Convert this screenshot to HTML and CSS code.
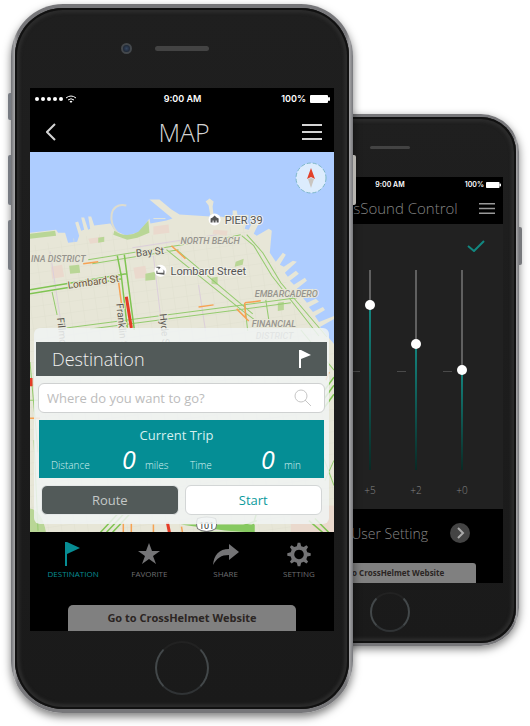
FILE: index.html
```html
<!DOCTYPE html>
<html lang="en">
<head>
<meta charset="utf-8">
<meta name="viewport" content="width=device-width, initial-scale=1">
<title>CrossHelmet App</title>
<link rel="stylesheet" href="styles.css">
</head>
<body>
<main class="stage">

  <section class="phone phone-back" aria-label="CrossSound Control">
    <span class="side-key key-power"></span>
    <div class="face">
      <div class="forehead"><span class="speaker"></span></div>
      <div class="screen">
        <div class="status">
          <span></span>
          <span>9:00 AM</span>
          <span class="power">100%
            <svg class="battery" viewBox="0 0 20 8"><rect width="18" height="8" rx="1"/><rect x="18" y="2" width="2" height="4" rx="1"/></svg>
          </span>
        </div>
        <header class="bar">
          <span></span>
          <h2 class="title">CrossSound Control</h2>
          <button class="icon-button" aria-label="Menu"><svg class="menu" viewBox="0 0 20 16"><path d="M0 2h20M0 8h20M0 14h20"/></svg></button>
        </header>
        <div class="mixer">
          <button class="icon-button confirm" aria-label="Apply"><svg viewBox="0 0 18 12"><path d="M1 6l6 5L17 1"/></svg></button>
          <div class="sliders">
            <label class="slider"><input type="range" min="-7.3" max="7.3" step="0.1" value="5" style="--top:18%"><span>+5</span></label>
            <label class="slider"><input type="range" min="-7.3" max="7.3" step="0.1" value="2" style="--top:37%"><span>+2</span></label>
            <label class="slider"><input type="range" min="-7.3" max="7.3" step="0.1" value="0" style="--top:50%"><span>+0</span></label>
          </div>
        </div>
        <div class="setting-row">
          <span>User Setting</span>
          <button class="next" aria-label="Open user setting"><svg viewBox="0 0 20 20"><path d="M8 5l5 5-5 5"/></svg></button>
        </div>
        <a class="site-link" href="#">Go to CrossHelmet Website</a>
      </div>
      <div class="chin"><span class="home"></span></div>
    </div>
  </section>

  <section class="phone phone-front" aria-label="Map">
    <span class="side-key key-mute"></span>
    <span class="side-key key-up"></span>
    <span class="side-key key-down"></span>
    <span class="side-key key-power"></span>
    <div class="face">
      <div class="forehead"><span class="camera"></span><span class="speaker"></span></div>
      <div class="screen">
        <div class="status">
          <span class="signal">
            <svg viewBox="0 0 42 10">
              <circle cx="2" cy="5" r="2"/><circle cx="8" cy="5" r="2"/><circle cx="14" cy="5" r="2"/><circle cx="20" cy="5" r="2"/><circle cx="26" cy="5" r="2"/>
              <path class="wifi" d="M31 4q5-4 10 0M33 6q3-2.500 6 0"/><path d="M34.500 7.200q1.500-1 3 0L36 9z"/>
            </svg>
          </span>
          <span>9:00 AM</span>
          <span class="power">100%
            <svg class="battery" viewBox="0 0 20 8"><rect width="18" height="8" rx="1"/><rect x="18" y="2" width="2" height="4" rx="1"/></svg>
          </span>
        </div>
        <header class="bar">
          <button class="icon-button" aria-label="Back"><svg class="back" viewBox="0 0 10 18"><path d="M9 1L1 9l8 8"/></svg></button>
          <h1 class="title">MAP</h1>
          <button class="icon-button" aria-label="Menu"><svg class="menu" viewBox="0 0 20 16"><path d="M0 1h20M0 8h20M0 15h20"/></svg></button>
        </header>

        <div class="map-view">
          <svg class="map" viewBox="30 152 303 380" preserveAspectRatio="xMidYMid slice" role="img" aria-label="San Francisco">
            <defs>
              <pattern id="blocks" width="13" height="11" patternUnits="userSpaceOnUse" patternTransform="rotate(-8)">
                <path d="M0 0H13M0 0V11" fill="none" stroke="#e0dfcf" stroke-width="1"/>
              </pattern>
            </defs>
            <rect x="30" y="152" width="303" height="380" fill="#aecdff"/>
            <path id="land" fill="#e7e6d7" d="M30 233L56 230L58 233L65 233L68 243L77 242L79 236L75 223L78 222L81 231L84 230L81 218L84 218L88 230L90 229L88 217L91 217L94 226L110 224L115 231L126 236L140 232L149 219L150 224L166 221L172 219L149 200L159 200L171 210L179 215L210 217L208 206L205 202L209 199L213 202L212 207L213 216L232 219L232 211L236 211L238 222L242 223L245 215L248 216L244 229L248 230L252 222L258 224L253 234L256 236L268 229L271 231L269 253L275 262L282 253L285 255L279 265L283 267L292 261L296 262L284 273L287 277L295 271L298 274L289 281L293 285L304 278L306 281L296 289L299 293L312 289L314 292L302 298L306 303L315 299L318 302L308 307L312 312L322 307L324 310L314 316L318 322L333 316L333 319L319 327L333 344V532H30Z"/>
            <path d="M126 206C108 202 108 224 117 233" fill="none" stroke="#dddccf" stroke-width="2"/>
            <path d="M153 219h12" stroke="#e7e6d7"/>
            <path fill="url(#blocks)" d="M30 246L112 232L126 238L245 226L333 348V532H30Z"/>
            <g fill="#ead9cd">
              <path d="M51 267l11-2 2 12-12 2zM133 268l12-2 2 12-12 1zM153 227l15-2 1 8-16 2zM213 230l14 1-1 5-14-2zM88 239l14-2 2 5-14 2zM290 505h43v27h-43z"/>
            </g>
            <g fill="#b9d696">
              <path d="M30 234l25-3 1 5-26 3zM114 231q12 8 24 1l10-11 1 12-12 5-10 2-14-5zM98 238l6-1v5l-6 1zM69 266l10-1 1 8-10 1zM145 274l10-2v8l-10 1zM235 262l8-3-1 6-8 2zM211 278l6-1v8l-6-1zM277 303l6-1v8l-6 1zM30 508q12 2 16 24H30z"/>
            </g>
            <g fill="none" stroke="#dccfdb" stroke-width="1">
              <path d="M50 252l12 78M153 256l9 76M198 285l7 46M132 248l84-13"/>
            </g>
            <g fill="none" stroke="#94cb6e" stroke-width="1">
              <path d="M88 260l100-16M92 264l86-14M166 250l76 61 16 12M176 250l76 64M66 328l230-30M90 329l200-26M52 292l5 23M265 300l3 20M244 304l3 27M212 241l28-6"/>
              <path d="M241 236l12 10 18 30 47 60M246 235l16 18 18 30 46 54"/>
              <path d="M30 362l8 90M34 440l4 90M30 400h10M300 330l33 40M318 445l15 40M324 480l9-20"/>
            </g>
            <g fill="none" stroke="#7fc452" stroke-width="1.500">
              <path d="M30 290l96-16M30 294l92-15M117 256l4 20 6 52M124 255l10 75"/>
              <path d="M320 395l13-18M320 403l13-18M320 412l13-18M100 532l28-30M106 532l30-32M112 532l32-34M200 532h50l6-20M230 530l26-10M308 520l14 12M314 518l14 14"/>
            </g>
            <path d="M180 524l74 0 0 8-30-2z" fill="#86c960"/>
            <g fill="none" stroke="#f6a253" stroke-width="1.500">
              <path d="M83 264l15-2M171 246l14 13M198 307l15-2M244 303l16-2M244 303l1 15M236 309l12 12M118 280l4 30M30 418h10M328 372l-3 8M123 522v10M131 522v10M153 524v8M181 526l1 6"/>
            </g>
            <path d="M126 297l5 31M31 378v8M167 522l2 10" fill="none" stroke="#e53b26" stroke-width="3"/>
            <g class="area">
              <text x="180" y="244">NORTH BEACH</text>
              <text x="31" y="262">INA DISTRICT</text>
              <text x="254" y="297">EMBARCADERO</text>
              <text x="251" y="327">FINANCIAL</text>
              <text x="255" y="339">DISTRICT</text>
            </g>
            <g class="street">
              <text transform="translate(136 257) rotate(-6)">Bay St</text>
              <text class="major" transform="translate(68 289) rotate(-8)">Lombard St</text>
              <text transform="translate(116 304) rotate(84)">Franklin St</text>
              <text transform="translate(57 318) rotate(84)">Fillmore St</text>
              <text transform="translate(159 314) rotate(84)">Hyde St</text>
            </g>
            <g class="place">
              <circle cx="214" cy="220" r="6"/><path d="M210 223v-4l2-1 2-2 2 2 2 1v4h-2v-2h-1v2h-2v-2h-1v2z"/>
              <text x="224" y="224">PIER 39</text>
              <circle cx="160" cy="271" r="6"/><path d="M156 274v-3h1v2h6v-3l-3-2-2 2v-2h-2v-1h3l5 4v4z"/>
              <text x="170" y="275">Lombard Street</text>
            </g>
            <g class="route-sign">
              <path d="M197 518q9-3 18 0 2 5 0 10-9 6-18 0-2-5 0-10z"/><text x="206" y="528" text-anchor="middle">101</text>
            </g>
          </svg>

          <button class="compass" aria-label="Compass"><svg viewBox="0 0 32 32"><circle cx="16" cy="16" r="15"/><path fill="#e2412a" d="M16 6l4 11-4-2-4 2z"/><path fill="#c9c5c0" d="M13 17l3-1 3 1-3 9z"/></svg></button>

          <form class="panel">
            <div class="panel-head">
              <label for="where">Destination</label>
              <svg viewBox="0 0 12 18"><path d="M1 0v18" stroke="#fff" stroke-width="2"/><path d="M2 0l10 5-10 4z" fill="#fff"/></svg>
            </div>
            <div class="search">
              <input id="where" type="text" placeholder="Where do you want to go?">
              <svg viewBox="0 0 18 18"><circle cx="7" cy="7" r="6"/><path d="M11 11l6 6"/></svg>
            </div>
            <div class="trip">
              <h2>Current Trip</h2>
              <div class="figures">
                <span class="name">Distance</span><span class="figure">0</span><span class="unit">miles</span>
                <span class="name">Time</span><span class="figure">0</span><span class="unit">min</span>
              </div>
            </div>
            <div class="actions">
              <button class="action route" type="button">Route</button>
              <button class="action start" type="button">Start</button>
            </div>
          </form>
        </div>

        <nav class="tabs">
          <button class="tab active"><svg viewBox="0 0 26 26"><path d="M5 1h2v24H5zM7 1l13 6-13 6z"/></svg>DESTINATION</button>
          <button class="tab"><svg viewBox="0 0 26 26"><path d="M13 2l3 8h8l-7 5 3 8-7-5-7 5 3-8-7-5h8z"/></svg>FAVORITE</button>
          <button class="tab"><svg viewBox="0 0 26 26"><path d="M16 3l10 8-10 8v-5C8 14 4 17 0 24 1 14 6 8 16 8z"/></svg>SHARE</button>
          <button class="tab"><svg viewBox="-2 -2 30 30"><path fill-rule="evenodd" d="M11.500 0h3l1 4 3 1 3-2 2 2-2 3 1 3 4 1v3l-4 1-1 3 2 3-2 2-3-2-3 1-1 4h-3l-1-4-3-1-3 2-2-2 2-3-1-3-4-1v-3l4-1 1-3-2-3 2-2 3 2 3-1zM13 8a5.500 5.500 0 1 0 .010 0z"/></svg>SETTING</button>
        </nav>
        <a class="site-link" href="#">Go to CrossHelmet Website</a>
      </div>
      <div class="chin"><span class="home"></span></div>
    </div>
  </section>

</main>
</body>
</html>
```
FILE: styles.css
```css
* { box-sizing: border-box; }

body {
  margin: 0;
  background: #fff;
  font-family: "Open Sans", "Noto Sans", sans-serif;
  font-weight: 300;
}

button {
  border: 0;
  padding: 0;
  margin: 0;
  background: none;
  color: inherit;
  font: inherit;
  cursor: pointer;
}

svg { display: block; }
h1, h2 { margin: 0; font-weight: 300; }

/* Two overlapping handsets share one grid row */
.stage {
  display: grid;
  grid-template-columns: 251fr 91fr 166fr;
  align-items: start;
  padding: 4px 11px 13px;
}

.phone {
  position: relative;
  grid-row: 1;
  min-width: 0;
  background: linear-gradient(90deg, #6f7074, #a3a3a5 1%, #77777a 2%, #77777a 98%, #a3a3a5 99%, #77787c);
}
.phone-front {
  grid-column: 1 / 3;
  z-index: 1;
  padding: 4px;
  border-radius: 52px;
  box-shadow: 0 4px 9px rgba(0, 0, 0, .5);
}
.phone-back {
  grid-column: 2 / 4;
  margin-top: 110px;
  padding: 3px;
  border-radius: 38px;
  box-shadow: 0 3px 8px rgba(0, 0, 0, .5);
}

.face {
  padding: 0 15px;
  border-radius: 48px;
  background: linear-gradient(#1f1f1f, #1a1a1a);
  box-shadow: inset 0 0 0 2px #111, inset 0 0 3px 5px #2b2b2b;
}
.phone-back .face {
  padding: 0 13px 0 12px;
  border-radius: 35px;
}

.side-key {
  position: absolute;
  left: -3px;
  width: 3px;
  height: 50px;
  border-radius: 2px 0 0 2px;
  background: #777b82;
}
.key-mute { top: 89px; height: 27px; }
.key-up { top: 151px; }
.key-down { top: 216px; }
.key-power {
  top: 151px;
  right: -3px;
  left: auto;
  border-radius: 0 2px 2px 0;
  background: #b7b5b0;
}
.phone-back .key-power { top: 113px; height: 38px; background: #77787c; }

.forehead {
  display: grid;
  grid-template-columns: 1fr auto 1fr;
  align-items: center;
  height: 80px;
}
.speaker {
  grid-column: 2;
  width: 54px;
  height: 5px;
  border-radius: 3px;
  background: #434343;
}
.camera {
  justify-self: end;
  width: 11px;
  height: 11px;
  margin-right: 23px;
  border: 2px solid #44484c;
  border-radius: 50%;
  background: radial-gradient(#35465e, #151a24);
}
.phone-back .forehead { height: 60px; }
.phone-back .speaker { width: 40px; height: 3px; }

.chin {
  display: flex;
  justify-content: center;
  height: 78px;
  padding-top: 10px;
}
.home {
  width: 54px;
  height: 54px;
  border: 2px solid #43484a;
  border-top-color: #222;
  border-bottom-color: #303335;
  border-radius: 50%;
}
.phone-back .chin { height: 60px; padding-top: 9px; }
.phone-back .home { width: 40px; height: 40px; }

.screen { background: #000; color: #d4d4d4; }

.status {
  display: grid;
  grid-template-columns: 1fr auto 1fr;
  align-items: center;
  height: 22px;
  padding: 0 4px 0 5px;
  color: #fff;
  font: 600 9px/12px "Inter", sans-serif;
}
.signal svg { width: 42px; height: 10px; fill: #fff; }
.signal .wifi { fill: none; stroke: #fff; stroke-width: 1; }
.power {
  display: flex;
  justify-content: flex-end;
  align-items: center;
  gap: 4px;
}
.battery { width: 20px; height: 8px; fill: #fff; }
.phone-back .status { height: 16px; padding: 0 2px; font-size: 7px; }
.phone-back .battery { width: 15px; height: 6px; }
.phone-back .power { gap: 2px; }

.bar {
  display: grid;
  grid-template-columns: 1fr auto 1fr;
  align-items: center;
  height: 42px;
  padding: 0 12px 0 16px;
}
.title { font-size: 25px; line-height: 44px; }
.bar svg { fill: none; stroke: #d4d4d4; stroke-width: 2; }
.bar .icon-button:last-child { justify-self: end; }
.bar .icon-button:first-child { justify-self: start; }
.back { width: 10px; height: 18px; }
.menu { width: 20px; height: 16px; }
.phone-back .bar { height: 31px; padding: 0 8px; color: #848484; }
.phone-back .title { font-size: 15px; line-height: 31px; }
.phone-back .menu { width: 16px; height: 13px; stroke: #999; }

/* Map */
.map-view {
  position: relative;
  padding: 176px 5px 8px 4px;
}
.map {
  position: absolute;
  inset: 0;
  width: 100%;
  height: 100%;
}
.map text { font-family: "Roboto", sans-serif; font-weight: 400; }
.map .area text { font-weight: 500; }
.area { fill: #96948e; font-size: 9px; font-style: italic; stroke: #e7e6d7; stroke-width: 2px; paint-order: stroke; }
.street { fill: #5d5953; font-size: 10px; stroke: #e7e6d7; stroke-width: 2px; paint-order: stroke; }
.street .major { fill: #6b5537; font-size: 10px; }
.place { fill: #555; font-size: 11px; }
.place circle { fill: #fff; }
.place text { stroke: #f1f0e8; stroke-width: 2px; paint-order: stroke; }
.route-sign path { fill: #fff; stroke: #777; stroke-width: 1; }
.route-sign text { fill: #333; font-size: 9px; }

.compass {
  position: absolute;
  top: 10px;
  right: 7px;
}
.compass svg { width: 32px; height: 32px; }
.compass circle { fill: #dcecfd; stroke: #7fb8c8; stroke-width: 1; stroke-dasharray: 4 2; }

.panel {
  position: relative;
  display: grid;
  gap: 7px;
  padding: 14px 2px 9px;
  border-radius: 6px;
  background: rgba(240, 243, 243, .85);
}
.panel-head {
  display: flex;
  justify-content: space-between;
  align-items: center;
  height: 34px;
  padding: 0 16px;
  background: #525a59;
  color: #f0f0f0;
  font-size: 18px;
}
.panel-head svg { width: 12px; height: 18px; }

.search {
  display: flex;
  align-items: center;
  height: 30px;
  margin: 0 2px;
  padding: 0 12px 0 8px;
  border: 1px solid #cfd1d1;
  border-radius: 6px;
  background: #fff;
}
.search input {
  flex: 1;
  min-width: 0;
  padding: 0;
  border: 0;
  outline: 0;
  background: none;
  color: #555;
  font: 400 13px/20px "Open Sans", sans-serif;
}
.search input::placeholder { color: #bcbcbc; opacity: 1; }
.search svg { width: 18px; height: 18px; fill: none; stroke: #c6c6c6; stroke-width: 1; }

.trip {
  height: 58px;
  margin: 0 3px;
  padding: 6px 12px 0;
  background: #058e95;
  color: #d5f0f0;
}
.trip h2 {
  font-size: 13px;
  font-weight: 400;
  line-height: 18px;
  padding-right: 10px;
  text-align: center;
}
.figures {
  display: grid;
  grid-template-columns: 71fr 23fr 45fr 71fr 23fr 28fr;
  align-items: baseline;
  font-size: 10px;
  line-height: 30px;
}
.figure { color: #fff; font-size: 25px; font-style: italic; font-weight: 400; }

.actions {
  display: grid;
  grid-template-columns: 1fr 1fr;
  gap: 6px;
  padding: 0 5px;
}
.action {
  height: 30px;
  border-radius: 6px;
  font-size: 13px;
  font-weight: 400;
}
.route { border: 1px solid #e6e9e9; background: #525a59; color: #c4c8c8; }
.start { border: 1px solid #d3d6d6; background: #fff; color: #0b9a9c; }

/* Lower bar */
.tabs {
  display: grid;
  grid-template-columns: repeat(3, 76fr) 70fr;
  padding: 9px 0 0 5px;
}
.tab {
  display: flex;
  flex-direction: column;
  align-items: center;
  gap: 1px;
  color: #6d6d6f;
  font-size: 8px;
  font-weight: 400;
  line-height: 12px;
}
.tab svg { width: 26px; height: 26px; fill: #747476; }
.tab.active { color: #078d94; }
.tab.active svg { fill: #078d94; }

.site-link {
  display: block;
  width: 75%;
  margin: 25px auto 0;
  border-radius: 5px 5px 0 0;
  background: #808080;
  color: #2b2523;
  font-size: 11px;
  font-weight: 700;
  line-height: 26px;
  text-align: center;
  text-decoration: none;
  white-space: nowrap;
}
.phone-back .site-link {
  width: 76%;
  margin-top: 6px;
  border-radius: 3px 3px 0 0;
  font-size: 8px;
  line-height: 20px;
}

/* Sound mixer */
.mixer {
  padding: 16px 18px 11px 0;
  background: #212121;
}
.confirm { display: block; margin: 0 0 18px auto; }
.confirm svg { width: 18px; height: 12px; fill: none; stroke: #128880; stroke-width: 2; }
.sliders { display: flex; justify-content: flex-end; }
.slider {
  display: grid;
  justify-items: center;
  width: 46px;
  gap: 12px;
  color: #858585;
  font-size: 10px;
  line-height: 16px;
}
.slider input {
  appearance: none;
  writing-mode: vertical-lr;
  direction: rtl;
  width: 46px;
  height: 200px;
  margin: 0;
  background:
    linear-gradient(#4a4a4a, #4a4a4a) 4px 101px / 9px 1px no-repeat,
    linear-gradient(#606060 var(--top), #14857f var(--top), #0a2a25) center / 2px 100% no-repeat;
}
.slider input::-webkit-slider-runnable-track { background: none; }
.slider input::-webkit-slider-thumb {
  appearance: none;
  width: 10px;
  height: 10px;
  border-radius: 50%;
  background: #fff;
}

.setting-row {
  display: flex;
  justify-content: flex-end;
  align-items: center;
  gap: 22px;
  height: 48px;
  padding-right: 33px;
  color: #858585;
  font-size: 14px;
}
.next svg { width: 20px; height: 20px; border-radius: 50%; background: #444; fill: none; stroke: #aaa; stroke-width: 2; }
```
